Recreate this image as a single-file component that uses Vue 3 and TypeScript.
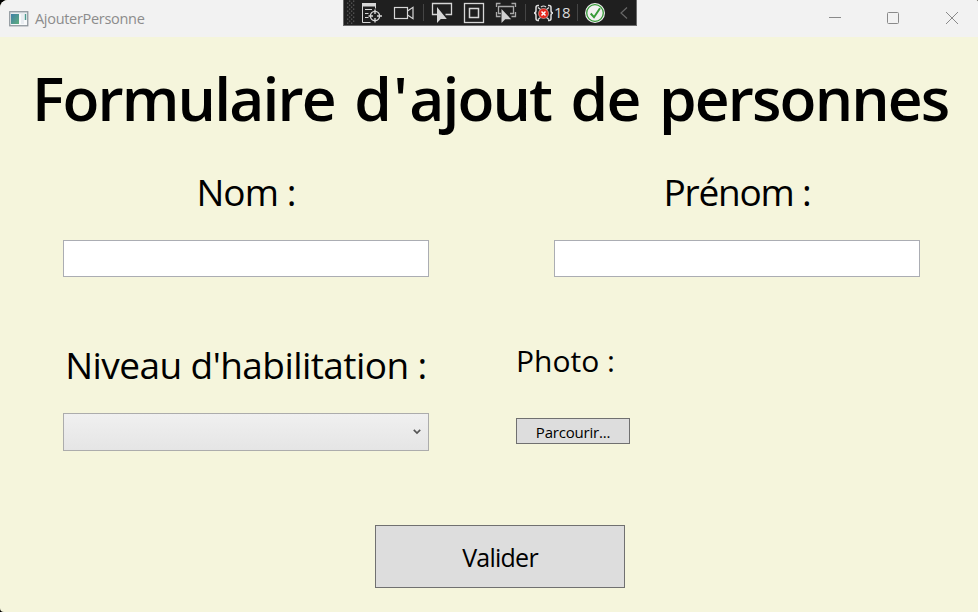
<script setup lang="ts">
import { ref } from 'vue'

const nom = ref<string>('')
const prenom = ref<string>('')
const gripRows: number[] = [3, 7, 11, 15, 19, 23]
</script>

<template>
  <div class="window">
    <header class="titlebar">
      <svg class="app-icon" width="20" height="16" viewBox="0 0 20 16">
        <defs>
          <linearGradient id="pane" x1="0" y1="0" x2="1" y2="1">
            <stop offset="0" stop-color="#3f80a8" />
            <stop offset="1" stop-color="#5fae7c" />
          </linearGradient>
        </defs>
        <rect x=".75" y=".75" width="18" height="14" fill="#f8fafb" stroke="#8f979d" stroke-width="1.3" />
        <path d="M1.5 1.8h16.5" stroke="#c5ccd2" />
        <rect x="2" y="3" width="8" height="10" fill="url(#pane)" />
        <rect x="12" y="3" width="3" height="10" fill="#e9edf1" />
        <path d="M16.5 3v6" stroke="#4c9b91" stroke-width="1.5" />
      </svg>
      <span class="caption">AjouterPersonne</span>
      <div class="controls">
        <svg width="58" height="37" viewBox="806 0 58 37"><path d="M829 17.5h12" /></svg>
        <svg width="58" height="37" viewBox="864 0 58 37"><rect x="887.5" y="12.5" width="11" height="11" rx="1" /></svg>
        <svg width="56" height="37" viewBox="922 0 56 37"><path d="M946 12l12 12M958 12l-12 12" /></svg>
      </div>
    </header>

    <div class="debug-bar">
      <svg width="14" height="25" viewBox="344 0 14 25" fill="#5b5b5b">
        <template v-for="y in gripRows" :key="y">
          <rect x="347" :y="y - 0.5" width="1.3" height="1.3" />
          <rect x="351" :y="y - 0.5" width="1.3" height="1.3" />
          <rect x="349" :y="y - 2.5" width="1.3" height="1.3" />
          <rect x="353" :y="y - 2.5" width="1.3" height="1.3" />
        </template>
      </svg>
      <svg width="30" height="25" viewBox="358 0 30 25" fill="none" stroke="#d6d6d6">
        <rect x="362" y="3" width="14" height="3.5" fill="#d6d6d6" stroke="none" />
        <path d="M362.5 6v16.5h8M375.5 6v2.5M365 9.5h7M365 13.5h3.5M365 17.5h3.5" />
        <circle cx="375" cy="16" r="4.6" stroke-width="1.4" />
        <path d="M375 9.5v4.5M375 18v4.5M368.5 16h4.5M377 16h5" stroke-width="1.4" />
      </svg>
      <svg width="34" height="25" viewBox="388 0 34 25" fill="none" stroke="#d6d6d6" stroke-width="1.2">
        <rect x="394.5" y="7.5" width="13" height="11" />
        <path d="M407.5 11l5.5-3.7v11.4l-5.5-3.7" />
      </svg>
      <svg width="4" height="25" viewBox="422 0 4 25"><path d="M423.5 4v17" stroke="#454545" /></svg>
      <svg width="32" height="25" viewBox="426 0 32 25">
        <path d="M437 14.5h-4.5v-11h19v11h-6" fill="none" stroke="#d6d6d6" stroke-width="1.3" />
        <path d="M437 7v16l3.8-4h6z" fill="#d6d6d6" />
      </svg>
      <svg width="32" height="25" viewBox="458 0 32 25" fill="none" stroke="#d6d6d6" stroke-width="1.3">
        <rect x="464.5" y="3.5" width="19" height="19" />
        <rect x="469.5" y="8.5" width="9" height="9" stroke-width="1.5" />
      </svg>
      <svg width="34" height="25" viewBox="490 0 34 25">
        <path d="M496.5 7V3.5h4M511.5 3.5h4V7M496.5 12v4.5h4M511.5 16.5h4V12M501 13.5h-2.5v-7h15v7H510" fill="none" stroke="#a9a9a9" stroke-width="1.3" />
        <path d="M501.5 9v14l3.7-3.7h6z" fill="#d0d0d0" />
      </svg>
      <svg width="4" height="25" viewBox="524 0 4 25"><path d="M525.5 4v17" stroke="#454545" /></svg>
      <svg width="26" height="25" viewBox="528 0 26 25">
        <path d="M539 5.5h-1q-2 0-2 2v3q0 2.5-2 2.5q2 0 2 2.5v3q0 2 2 2h1M548 5.5h1q2 0 2 2v3q0 2.5 2 2.5q-2 0-2 2.5v3q0 2-2 2h-1" fill="none" stroke="#dedede" stroke-width="1.5" />
        <path d="M538 7.5l2.5 2M549 7.5l-2.5 2M538 19.5l2.5-2M549 19.5l-2.5-2M541 7q2.5-2 5 0" fill="none" stroke="#dedede" stroke-width="1.2" />
        <circle cx="543.5" cy="13.5" r="5" fill="#e5271c" stroke="#f2dcda" stroke-width=".5" />
        <path d="M541.5 11.5l4 4M545.5 11.5l-4 4" stroke="#fff" stroke-width="1.5" />
      </svg>
      <span class="count">18</span>
      <svg width="4" height="25" viewBox="576 0 4 25"><path d="M577.5 4v17" stroke="#454545" /></svg>
      <svg width="32" height="25" viewBox="580 0 32 25">
        <circle cx="595" cy="13" r="10" fill="#f1f1f1" />
        <circle cx="595" cy="13" r="8.3" fill="none" stroke="#369b38" stroke-width="1.3" />
        <path d="M590.7 13.5l3.3 3.7 6-9" fill="none" stroke="#369b38" stroke-width="2" />
      </svg>
      <svg width="24" height="25" viewBox="612 0 24 25"><path d="M627 7.5l-6 5.5 6 5.5" fill="none" stroke="#686868" stroke-width="1.2" /></svg>
    </div>

    <main class="form">
      <h1>Formulaire <span class="elision">d'</span>ajout de personnes</h1>
      <section class="row">
        <div class="cell">
          <label class="label nom" for="nom">Nom :</label>
          <input id="nom" v-model="nom" class="field" type="text" />
        </div>
        <div class="cell">
          <label class="label prenom" for="prenom">Prénom :</label>
          <input id="prenom" v-model="prenom" class="field" type="text" />
        </div>
      </section>
      <section class="row second">
        <div class="cell">
          <div class="label niveau">Niveau d'habilitation :</div>
          <div class="combo" role="combobox" tabindex="0">
            <svg width="8" height="6" viewBox="0 0 8 6"><path d="M.8 .8l3.2 3.2 3.2-3.2" fill="none" stroke="#555" stroke-width="1.7" /></svg>
          </div>
        </div>
        <div class="cell photo">
          <div class="label small">Photo :</div>
          <button class="browse" type="button">Parcourir...</button>
        </div>
      </section>
      <button class="submit" type="button">Valider</button>
    </main>
  </div>
</template>

<style>
body {
  background: #000;
}
</style>

<style scoped>
.window {
  position: relative;
  width: 978px;
  height: 612px;
  box-sizing: border-box;
  overflow: hidden;
  display: flex;
  flex-direction: column;
  background: #f5f5dc;
  border-radius: 8px 2px 0 4px;
  font-family: 'Open Sans', 'Noto Sans', sans-serif;
  color: #000;
}
.titlebar {
  flex: none;
  height: 37px;
  display: flex;
  align-items: center;
  padding-left: 9px;
  background: #f2f2f2;
}
.caption {
  margin-left: 6px;
  font-size: 14.5px;
  line-height: 20px;
  letter-spacing: -0.3px;
  color: #8c8c8c;
}
.controls {
  margin-left: auto;
  display: flex;
  fill: none;
  stroke: #8a8a8a;
  stroke-width: 1;
}
.debug-bar {
  position: absolute;
  top: 0;
  left: 343px;
  width: 294px;
  height: 26px;
  box-sizing: border-box;
  display: flex;
  background: #1f1f1f;
  border: 1px solid #6a6a6a;
  border-top: 0;
}
.debug-bar svg {
  flex: none;
}
.count {
  width: 22px;
  flex: none;
  font-size: 15px;
  line-height: 25px;
  letter-spacing: -0.5px;
  color: #dcdcdc;
}
.form {
  flex: 1;
  display: flex;
  flex-direction: column;
}
h1 {
  margin: 20px 0 0;
  padding-left: 32px;
  height: 80px;
  font-size: 60.5px;
  line-height: 82px;
  letter-spacing: -1.85px;
  word-spacing: 5.6px;
  font-weight: 600;
  white-space: nowrap;
}
.elision {
  letter-spacing: 1.3px;
}
.row {
  display: grid;
  grid-template-columns: 491px 487px;
  margin-top: 29px;
}
.second {
  margin-top: 62px;
}
.cell {
  display: flex;
  flex-direction: column;
  padding-left: 63px;
}
.label {
  width: 366px;
  height: 50px;
  margin-bottom: 24px;
  font-size: 37px;
  line-height: 51px;
  text-align: center;
  white-space: nowrap;
}
.nom {
  letter-spacing: -0.9px;
}
.prenom {
  letter-spacing: -1.2px;
}
.niveau {
  letter-spacing: -0.57px;
}
.field {
  width: 366px;
  height: 37px;
  box-sizing: border-box;
  padding: 0 8px;
  border: 1px solid #abadb3;
  border-radius: 0;
  outline: 0;
  background: #fff;
  font: 20px 'Open Sans', sans-serif;
}
.combo {
  width: 366px;
  height: 38px;
  box-sizing: border-box;
  display: flex;
  align-items: center;
  justify-content: flex-end;
  padding-right: 7px;
  border: 1px solid #acacac;
  background: linear-gradient(#f0f0f0, #e5e5e5);
}
.photo {
  padding-left: 25px;
}
.small {
  margin-bottom: 29px;
  font-size: 30px;
  line-height: 44px;
  text-align: left;
}
button {
  padding: 0;
  border: 1px solid #707070;
  border-radius: 0;
  background: #ddd;
  color: #000;
  font-family: inherit;
  box-sizing: border-box;
}
.browse {
  width: 114px;
  height: 26px;
  padding-top: 2px;
  font-size: 15px;
  line-height: 22px;
  letter-spacing: -0.2px;
}
.submit {
  width: 250px;
  height: 63px;
  margin: 74px 0 0 375px;
  padding-top: 2px;
  font-size: 25px;
  line-height: 59px;
  letter-spacing: -0.75px;
}
</style>
